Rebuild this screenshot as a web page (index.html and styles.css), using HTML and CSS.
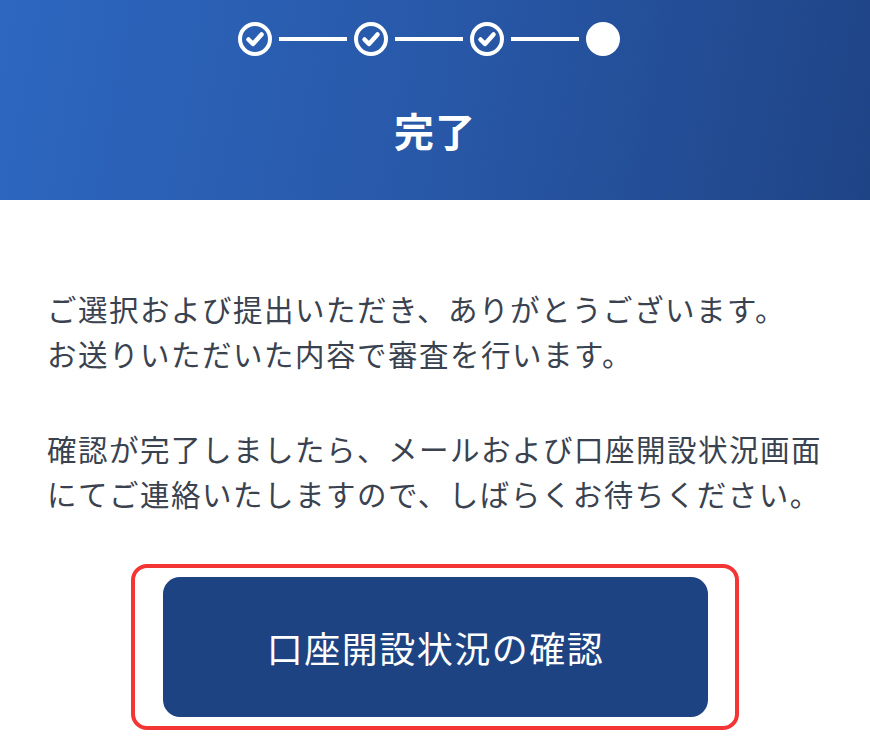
FILE: index.html
```html
<!DOCTYPE html>
<html lang="ja">
<head>
<meta charset="utf-8">
<link rel="stylesheet" href="styles.css">
</head>
<body>
<header class="hero">
  <div class="stepper">
    <svg class="step" viewBox="0 0 34 34" width="34" height="34"><circle cx="17" cy="17" r="15" fill="none" stroke="#fff" stroke-width="4"/><path d="M10.5 17.5 L15 22 L23.5 12.5" fill="none" stroke="#fff" stroke-width="4.5" stroke-linecap="round" stroke-linejoin="round"/></svg>
    <span class="line"></span>
    <svg class="step" viewBox="0 0 34 34" width="34" height="34"><circle cx="17" cy="17" r="15" fill="none" stroke="#fff" stroke-width="4"/><path d="M10.5 17.5 L15 22 L23.5 12.5" fill="none" stroke="#fff" stroke-width="4.5" stroke-linecap="round" stroke-linejoin="round"/></svg>
    <span class="line"></span>
    <svg class="step" viewBox="0 0 34 34" width="34" height="34"><circle cx="17" cy="17" r="15" fill="none" stroke="#fff" stroke-width="4"/><path d="M10.5 17.5 L15 22 L23.5 12.5" fill="none" stroke="#fff" stroke-width="4.5" stroke-linecap="round" stroke-linejoin="round"/></svg>
    <span class="line"></span>
    <span class="dot"></span>
  </div>
  <h1 class="title">完了</h1>
</header>
<main class="content">
  <p class="msg">ご選択および提出いただき、ありがとうございます。<br>お送りいただいた内容で審査を行います。</p>
  <p class="msg">確認が完了しましたら、メールおよび口座開設状況画面<br>にてご連絡いたしますので、しばらくお待ちください。</p>
  <div class="highlight">
    <button class="cta" type="button">口座開設状況の確認</button>
  </div>
</main>
</body>
</html>
```

FILE: styles.css
```css
html, body {
  margin: 0;
  padding: 0;
  background: #fff;
}
body {
  font-family: "Noto Sans CJK JP", "Noto Sans", sans-serif;
  width: 870px;
  height: 756px;
  overflow: hidden;
}
.hero {
  height: 200px;
  box-sizing: border-box;
  background: linear-gradient(100deg, #2d67c0 0%, #2858a8 50%, #1f4486 100%);
  display: flex;
  flex-direction: column;
  align-items: center;
  padding-top: 22px;
}
.stepper {
  display: flex;
  align-items: center;
  gap: 7px;
  margin-right: 12px;
}
.step {
  display: block;
}
.line {
  width: 68px;
  height: 4px;
  background: #fff;
}
.dot {
  width: 34px;
  height: 34px;
  border-radius: 50%;
  background: #fff;
}
.title {
  margin: 45px 0 0;
  color: #fff;
  font-size: 40px;
  font-weight: 700;
  line-height: 58px;
  letter-spacing: 1px;
}
.content {
  padding: 86px 0 0 47px;
}
.msg {
  margin: 0 0 50px;
  color: #3a4250;
  font-size: 29.5px;
  line-height: 45px;
  letter-spacing: 1.5px;
}
.highlight {
  margin: -2px 0 0 84px;
  width: 608px;
  height: 166px;
  border: 4px solid #f43535;
  border-radius: 16px;
  padding: 9px 27px 9px 28px;
  box-sizing: border-box;
  display: flex;
}
.cta {
  flex: 1;
  border: 0;
  border-radius: 17px;
  background: #1e4383;
  color: #fff;
  font-family: inherit;
  font-size: 36px;
  font-weight: 400;
  letter-spacing: 1.5px;
  padding: 0;
}
```
